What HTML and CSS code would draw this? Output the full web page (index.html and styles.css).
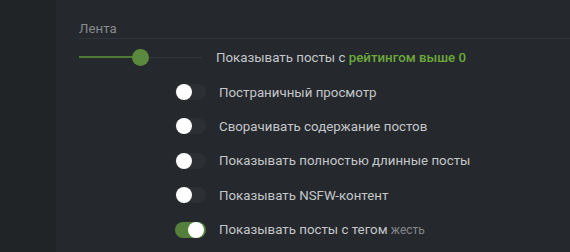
FILE: index.html
```html
<!DOCTYPE html>
<html lang="ru">
  <head>
    <meta charset="UTF-8" />
    <meta name="viewport" content="width=device-width, initial-scale=1.0" />
    <title>Настройки ленты</title>
    <link rel="stylesheet" href="styles.css">
  </head>

  <body>
    <div class="sidebar"></div>

    <div class="panel">
      <h3 class="section-title">Лента</h3>

      <div class="rating">
        <div class="slider">
          <div class="slider-fill"></div>
          <div class="slider-knob"></div>
        </div>
        <div class="rating-label">
          Показывать посты с <span class="accent">рейтингом выше 0</span>
        </div>
      </div>

      <div class="options">
        <div class="option">
          <span class="switch"></span>
          <span class="option-label">Постраничный просмотр</span>
        </div>
        <div class="option">
          <span class="switch"></span>
          <span class="option-label">Сворачивать содержание постов</span>
        </div>
        <div class="option">
          <span class="switch"></span>
          <span class="option-label">Показывать полностью длинные посты</span>
        </div>
        <div class="option">
          <span class="switch"></span>
          <span class="option-label">Показывать NSFW-контент</span>
        </div>
        <div class="option">
          <span class="switch on"></span>
          <span class="option-label">Показывать посты с тегом <span class="tag">жесть</span></span>
        </div>
      </div>
    </div>
  </body>
</html>
```

FILE: styles.css
```css
body {
  margin: 0;
  height: 252px;
  display: flex;
  background-color: #25282c;
  font-family: Roboto, "Liberation Sans", sans-serif;
  font-size: 13.3px;
  color: #c4c7ca;
  overflow: hidden;
}

.sidebar {
  width: 56px;
  flex-shrink: 0;
  background-color: #212427;
}

.panel {
  flex: 1;
  padding: 20px 0 0 23px;
}

.section-title {
  margin: 0;
  font-size: 13.3px;
  font-weight: normal;
  line-height: 18px;
  color: #878b8f;
  border-bottom: 1px solid #303337;
}

.rating {
  display: flex;
  align-items: center;
  gap: 14px;
  height: 20px;
  margin-top: 8px;
}

.slider {
  position: relative;
  width: 123px;
  height: 1px;
  background-color: #33373b;
}

.slider-fill {
  width: 62px;
  height: 2px;
  margin-top: -0.5px;
  background-color: #4f7a35;
}

.slider-knob {
  position: absolute;
  left: 53px;
  top: -8px;
  width: 17px;
  height: 17px;
  border-radius: 50%;
  background-color: #5b8a3e;
}

.accent {
  color: #6ca83c;
  font-weight: 500;
}

.options {
  margin: 16px 0 0 96px;
  display: flex;
  flex-direction: column;
  gap: 16.4px;
}

.option {
  display: flex;
  align-items: center;
  gap: 13px;
  height: 18px;
}

.switch {
  position: relative;
  width: 31px;
  height: 16px;
  border-radius: 8px;
  background-color: #2c2f33;
  flex-shrink: 0;
}

.switch::after {
  content: "";
  position: absolute;
  left: 1px;
  top: 0;
  width: 16px;
  height: 16px;
  border-radius: 50%;
  background-color: #ffffff;
}

.switch.on {
  background-color: #55803c;
}

.switch.on::after {
  left: 13px;
}

.tag {
  font-size: 12px;
  color: #85898d;
}
```
